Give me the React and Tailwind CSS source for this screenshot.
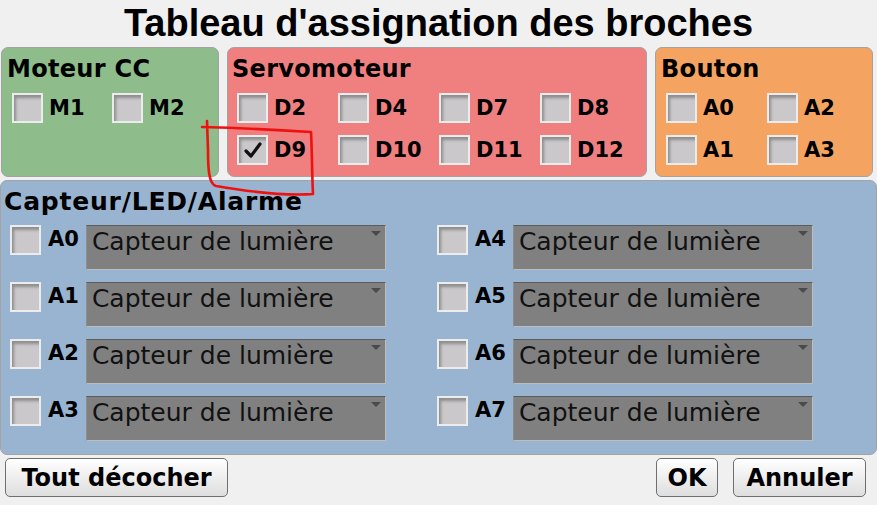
import { useState } from "react";

const Box = ({ checked, onClick }) => (
  <button
    onClick={onClick}
    className="w-[31px] h-[30px] shrink-0 border-2 border-[#ececec] bg-[#cac8ca] shadow-[inset_3px_4px_3px_-1px_#8e8e8e] flex items-center justify-center"
  >
    {checked && (
      <svg width="22" height="20" viewBox="0 0 22 20">
        <path d="M4 11 L9 16 L18 4" stroke="#111" strokeWidth="3.2" fill="none" strokeLinecap="round" strokeLinejoin="round" />
      </svg>
    )}
  </button>
);

const Pin = ({ name, checked, onToggle }) => (
  <div className="flex items-center gap-[6px]">
    <Box checked={checked} onClick={onToggle} />
    <span className="text-[21px] font-bold leading-none">{name}</span>
  </div>
);

const Select = () => (
  <div className="relative w-[300px] h-[45px] bg-[#808080] border border-t-[#5c5c5c] border-l-[#8e8e8e] border-r-[#bdbdbd] border-b-[#bdbdbd] pl-[5px] pt-[1px] text-[25px] leading-[30px] text-[#111]">
    Capteur de lumière
    <svg className="absolute right-[4px] top-[5px]" width="10" height="6" viewBox="0 0 10 6">
      <path d="M0 0 L10 0 L5 5 Z" fill="#4a4a4a" />
    </svg>
  </div>
);

const Heading = ({ children, className = "text-[24px] tracking-[0.3px]" }) => (
  <div className={`font-bold leading-[28px] ${className}`}>{children}</div>
);

const panel = "rounded-[7px] border border-[#a3a3a3] pt-[7px]";

const App = () => {
  const [checked, setChecked] = useState({ D9: true });
  const toggle = (k) => setChecked((c) => ({ ...c, [k]: !c[k] }));

  return (
    <div className="w-[877px] h-[505px] bg-[#f0f0f0] relative overflow-hidden font-['DejaVu_Sans',sans-serif] text-black">
      <h1 className="h-[47px] text-center text-[38px] font-bold font-['Liberation_Sans',sans-serif] leading-[40px] pt-[3px]">
        Tableau d'assignation des broches
      </h1>

      <div className="flex gap-[8px] pl-[1px] h-[130px]">
        <div className={`w-[218px] bg-[#8fbc8b] px-[5px] ${panel}`}>
          <Heading>Moteur CC</Heading>
          <div className="grid grid-cols-[100px_100px] mt-[10px] pl-[5px]">
            <Pin name="M1" checked={checked.M1} onToggle={() => toggle("M1")} />
            <Pin name="M2" checked={checked.M2} onToggle={() => toggle("M2")} />
          </div>
        </div>

        <div className={`w-[420px] bg-[#f08080] px-[4px] ${panel}`}>
          <Heading>Servomoteur</Heading>
          <div className="grid grid-cols-[101px_101px_101px_101px] gap-y-[12px] mt-[10px] pl-[5px]">
            {["D2", "D4", "D7", "D8", "D9", "D10", "D11", "D12"].map((d) => (
              <Pin key={d} name={d} checked={checked[d]} onToggle={() => toggle(d)} />
            ))}
          </div>
        </div>

        <div className={`w-[218px] bg-[#f4a460] px-[5px] ${panel}`}>
          <Heading>Bouton</Heading>
          <div className="grid grid-cols-[101px_101px] gap-y-[12px] mt-[10px] pl-[5px]">
            {["A0", "A2", "A1", "A3"].map((a) => (
              <Pin key={a} name={a} checked={checked["b" + a]} onToggle={() => toggle("b" + a)} />
            ))}
          </div>
        </div>
      </div>

      <div className={`mt-[3px] h-[275px] w-[877px] bg-[#99b4d1] pl-[3px] ${panel}`}>
        <Heading className="text-[25px] tracking-[0.8px]">Capteur/LED/Alarme</Heading>
        <div className="grid grid-cols-[427px_427px] gap-y-[12px] mt-[9px] pl-[6px]">
          {["A0", "A4", "A1", "A5", "A2", "A6", "A3", "A7"].map((a) => (
            <div key={a} className="flex items-start">
              <Box checked={checked["c" + a]} onClick={() => toggle("c" + a)} />
              <span className="text-[21px] font-bold leading-none mt-[4px] ml-[7px] mr-[7px]">{a}</span>
              <Select />
            </div>
          ))}
        </div>
      </div>

      <div className="flex justify-between px-[5px] mt-[3px]">
        <button className="h-[39px] w-[223px] rounded-[5px] border border-[#6f6f6f] bg-gradient-to-b from-white to-[#dedede] text-[24px] font-bold leading-none">
          Tout décocher
        </button>
        <div className="flex gap-[15px] pr-[6px]">
          <button className="h-[39px] w-[62px] rounded-[5px] border border-[#6f6f6f] bg-gradient-to-b from-white to-[#dedede] text-[24px] font-bold leading-none">
            OK
          </button>
          <button className="h-[39px] w-[133px] rounded-[5px] border border-[#6f6f6f] bg-gradient-to-b from-white to-[#dedede] text-[24px] font-bold leading-none">
            Annuler
          </button>
        </div>
      </div>

      <svg className="absolute left-0 top-0 pointer-events-none" width="877" height="505">
        <path
          d="M202 127 C240 128 280 130 311 132 C312 150 312 175 313 194 C285 196 245 191 216 186 C209 184 208 170 208 150 L207 121"
          stroke="#f01010"
          strokeWidth="2.6"
          fill="none"
          strokeLinecap="round"
          strokeLinejoin="round"
        />
      </svg>
    </div>
  );
};

export default App;
